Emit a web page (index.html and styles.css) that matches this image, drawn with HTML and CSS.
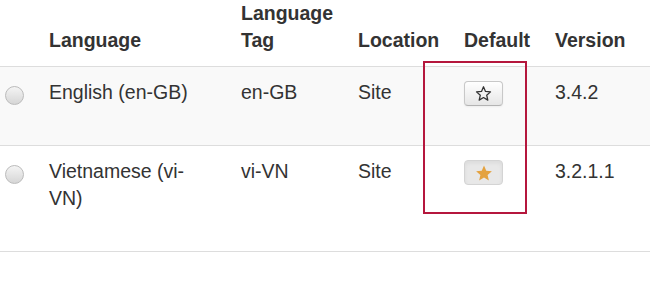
FILE: index.html
```html
<!DOCTYPE html>
<html lang="en">
<head>
    <meta charset="UTF-8">
    <title>Languages: Installed</title>
    <link rel="stylesheet" href="styles.css">
</head>
<body>
    <div class="wrap">
        <table class="lang-table">
            <thead>
                <tr>
                    <th class="col-select"></th>
                    <th class="col-name">Language</th>
                    <th class="col-tag">Language Tag</th>
                    <th class="col-loc">Location</th>
                    <th class="col-default">Default</th>
                    <th class="col-version">Version</th>
                </tr>
            </thead>
            <tbody>
                <tr class="row-odd">
                    <td class="col-select"><span class="radio"></span></td>
                    <td>English (en-GB)</td>
                    <td>en-GB</td>
                    <td>Site</td>
                    <td class="col-default">
                        <button class="star-btn" type="button">
                            <svg width="17" height="17" viewBox="0 0 24 24"><path d="M12 2.5l2.8 6.6 7.1.6-5.4 4.7 1.6 7-6.1-3.7-6.1 3.7 1.6-7-5.4-4.7 7.1-.6z" fill="none" stroke="#333" stroke-width="1.8" stroke-linejoin="round"/></svg>
                        </button>
                    </td>
                    <td>3.4.2</td>
                </tr>
                <tr class="row-even">
                    <td class="col-select"><span class="radio"></span></td>
                    <td>Vietnamese (vi-VN)</td>
                    <td>vi-VN</td>
                    <td>Site</td>
                    <td class="col-default">
                        <button class="star-btn active" type="button">
                            <svg width="18" height="18" viewBox="0 0 24 24"><path d="M12 2l3 6.9 7.5.7-5.7 5 1.7 7.4L12 18.1 5.5 22l1.7-7.4-5.7-5 7.5-.7z" fill="#e4a23f"/></svg>
                        </button>
                    </td>
                    <td>3.2.1.1</td>
                </tr>
            </tbody>
        </table>
        <div class="highlight"></div>
    </div>
</body>
</html>
```

FILE: styles.css
```css
body {
    margin: 0;
    font-family: "Liberation Sans", Arial, sans-serif;
    font-size: 19.5px;
    line-height: 27px;
    color: #333;
    background: #fff;
    overflow: hidden;
}
.wrap {
    position: relative;
    margin-top: -12px;
}
.lang-table {
    border-collapse: collapse;
    width: 680px;
    table-layout: fixed;
}
.lang-table th,
.lang-table td {
    padding: 12px 12px;
    text-align: left;
    vertical-align: top;
}
.lang-table th {
    font-weight: bold;
    vertical-align: bottom;
    border-bottom: 1px solid #ddd;
}
.lang-table td {
    border-bottom: 1px solid #ddd;
}
.col-select { width: 37px; box-sizing: border-box; }
.lang-table .col-select { padding-left: 5px; padding-right: 0; }
th.col-name { width: 192px; box-sizing: border-box; }
th.col-tag { width: 117px; box-sizing: border-box; }
th.col-loc { width: 106px; box-sizing: border-box; }
th.col-default { width: 91px; box-sizing: border-box; }
.row-odd td {
    background: #f9f9f9;
    height: 54px;
}
.row-even td {
    height: 81px;
}
.radio {
    display: inline-block;
    width: 17px;
    height: 17px;
    margin-top: 7px;
    border: 1px solid #bcbcbc;
    border-radius: 50%;
    background: linear-gradient(#f4f4f4, #d6d6d6);
}
.star-btn {
    display: flex;
    align-items: center;
    justify-content: center;
    width: 39px;
    height: 25px;
    margin-top: 2px;
    padding: 0;
    border: 1px solid #c8c8c8;
    border-bottom-color: #b3b3b3;
    border-radius: 4px;
    background: linear-gradient(#ffffff, #e6e6e6);
    box-shadow: 0 1px 2px rgba(0,0,0,0.05);
}
.star-btn.active {
    background: #e8e8e8;
    border-color: #d4d4d4;
    box-shadow: inset 0 2px 4px rgba(0,0,0,0.06);
}
.highlight {
    position: absolute;
    left: 423px;
    top: 73px;
    width: 100px;
    height: 149px;
    border: 2px solid #b5173d;
}
```
